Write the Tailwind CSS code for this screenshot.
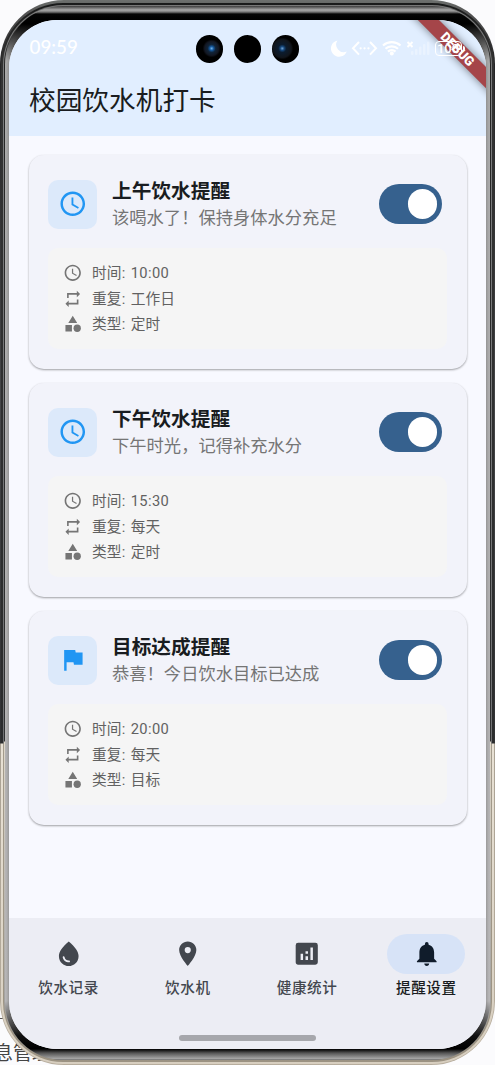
<!DOCTYPE html>
<html lang="zh-CN">
<head>
<meta charset="utf-8">
<meta name="viewport" content="width=device-width">
<title>校园饮水机打卡</title>
<script src="https://cdn.jsdelivr.net/npm/@tailwindcss/browser@4"></script>
</head>
<body class="relative h-[1065px] w-[495px] overflow-hidden bg-[#fbfbfd] font-['Roboto','Noto_Sans_CJK_SC',sans-serif]">
<svg width="0" height="0" class="absolute">
  <symbol id="clock" viewBox="0 0 24 24"><path fill="currentColor" d="M11.99 2C6.47 2 2 6.48 2 12s4.47 10 9.99 10C17.52 22 22 17.52 22 12S17.52 2 11.99 2zM12 20c-4.42 0-8-3.58-8-8s3.58-8 8-8 8 3.58 8 8-3.58 8-8 8zm.5-13H11v6l5.25 3.15.75-1.23-4.5-2.67z"/></symbol>
  <symbol id="repeat" viewBox="0 0 24 24"><path fill="currentColor" d="M7 7h10v3l4-4-4-4v3H5v6h2V7zm10 10H7v-3l-4 4 4 4v-3h12v-6h-2v4z"/></symbol>
  <symbol id="category" viewBox="0 0 24 24"><path fill="currentColor" d="m12 2-5.500 9h11zM3 13.500h8v8H3z"/><circle cx="17.500" cy="17.500" r="4.500" fill="currentColor"/></symbol>
  <symbol id="flag" viewBox="0 0 24 24"><path fill="currentColor" d="M14.400 6 14 4H5v17h2v-7h5.600l.4 2h7V6z"/></symbol>
</svg>
<div class="absolute bottom-0 left-[-6px] z-0 h-[22px] whitespace-nowrap text-[19px] leading-[22px] text-[#444]">息管理</div>
<div class="absolute left-0 top-[1018px] h-px w-2 bg-[#555]"></div>

<!-- Phone body -->
<div class="relative h-[1065px] rounded-[64px] bg-[linear-gradient(#6d706e_0,#555_12px,#252526_60px,#454648_400px,#303133_743px,#aaa294_744px,#b8ae9e_100%)] px-[1px] pt-[3px] pb-[1px]">
<div class="h-full rounded-[62px] bg-[linear-gradient(#191a1a_0,#333_60px,#2b2c2d_740px,#e8e1d4_741px,#d7cebf_100%)] px-[2px] pt-[2px] pb-[2px]">
<div class="h-full rounded-[60px] bg-[linear-gradient(#777_0,#7b7c7d_70px,#707173_738px,#a39b8c_739px,#9b9282_100%)] px-[1px] pt-[1px] pb-[2px]">
<div class="h-full rounded-[59px] bg-[linear-gradient(#888_0,#aaa_6px,#4b4b4b_9px,#252525_50px,#303132_735px,#ded7c9_736px,#999_1041px,#777_100%)] px-[1px] pt-0 pb-0">
<div class="h-full rounded-[58px] bg-[linear-gradient(#3b3b3b_0,#aaa_4px,#777_6px,#050505_8px,#000_18px,#aaa_55px,#b8b7b8_995px,#111_1030px,#000_1043px,#555_1047px,#aaa_1053px,#555_100%)] px-[4px] pt-[14px] pb-[8px]">

<!-- Screen -->
<div class="relative flex h-[1029px] flex-col overflow-hidden rounded-[48px] bg-[#f8f9ff] shadow-[0_0_3px_1px_#00000030]">
  <header class="h-[115.500px] shrink-0 bg-[#e1eeff]">
    <div class="relative flex h-[57px] items-center justify-between pl-[20.500px] pr-[22px] text-white">
      <span class="-mt-[3px] font-['Lato','Noto_Sans_CJK_SC',sans-serif] text-[18.800px] font-medium leading-none">09:59</span>
      <div class="absolute left-[186.500px] top-[15px] flex gap-[10.500px]">
        <div class="h-[27.500px] w-[27.500px] rounded-full bg-[radial-gradient(circle_at_58%_48%,#71b4ec_0,#15579b_2px,#102439_4px,#131722_7px,#000_9px)]"></div>
        <div class="h-[27.500px] w-[27.500px] rounded-full bg-black"></div>
        <div class="h-[27.500px] w-[27.500px] rounded-full bg-[radial-gradient(circle_at_38%_48%,#71a4d6_0,#16477b_2px,#0b1c2f_4px,#11151b_9px,#000_11px)]"></div>
      </div>
      <svg width="134" height="20" viewBox="0 0 134 20" fill="none" stroke="#fff" stroke-width="2" class="absolute left-[321px] top-[18px]">
        <path fill="#fff" stroke="none" d="M7.500 2.500A8.200 8.200 0 1 0 16.800 13.500 7.500 7.500 0 0 1 7.500 2.500z"/>
        <path d="m29 4-6 6.300 6 6.300M40 4l6 6.300-6 6.300"/>
        <path stroke-linecap="round" stroke-width="2.200" d="M30.600 10.300h.1M34.500 10.300h.1M38.400 10.300h.1"/>
        <path stroke-width="2.200" d="M53 7.500a13 13 0 0 1 17.500 0M55.500 10.800a9 9 0 0 1 12.500 0M58 13.600a5.300 5.300 0 0 1 7.500 0"/>
        <circle cx="61.800" cy="15.500" r="2" fill="#fff" stroke="none"/>
        <path d="m77.500 4 5 5m0-5-5 5"/>
        <g fill="#fff" fill-opacity=".3" stroke="none"><rect x="81" y="13" width="2.500" height="4" rx="1"/><rect x="85" y="11" width="2.500" height="6" rx="1"/><rect x="89" y="8.500" width="2.500" height="8.500" rx="1"/><rect x="93" y="6" width="2.500" height="11" rx="1"/><rect x="97" y="3.500" width="2.500" height="13.500" rx="1"/></g>
      </svg>
    </div>
    <h1 class="mt-px pl-5 text-[26.700px] font-normal leading-[46px] text-[#191c20]">校园饮水机打卡</h1>
  </header>
  <!-- Debug ribbon, with the battery indicator over it -->
  <div class="absolute left-[378px] top-[21px] flex h-[14.500px] w-[140px] rotate-45 items-center justify-center bg-[#a54549] text-[13px] font-black leading-none text-white shadow-[0_0_8px_#0000007f]"><span class="translate-x-[1px]">DEBUG</span></div>
  <div class="absolute left-[425.500px] top-[21px] flex h-[15px] w-[27px] items-center justify-center rounded-[4px] border-[1.500px] border-white text-[13px] font-medium leading-none text-white">100</div>
  <div class="absolute left-[453.500px] top-[26px] h-[5px] w-[2px] rounded-r bg-white"></div>

  <main class="flex grow flex-col gap-[14.500px] px-[19.500px] pt-[19.500px]">
    <section class="h-[213.500px] rounded-[15px] bg-[#f2f3fa] px-[19.500px] pt-[24.500px] shadow-[0_1px_2px_#0000004d,0_1px_3px_#00000014]">
      <div class="flex h-[49px] items-center">
        <div class="flex h-[49px] w-[49px] items-center justify-center rounded-[10px] bg-[#dce9fa] text-[#2196f3]"><svg width="29.500" height="29.500"><use href="#clock"/></svg></div>
        <div class="ml-[15px] grow whitespace-nowrap pt-px"><h2 class="text-[19.700px] font-bold leading-[27px] text-[#191c20]">上午饮水提醒</h2><p class="text-[17.300px] leading-[26px] text-[#757575]">该喝水了！保持身体水分充足</p></div>
        <div class="mr-[5px] flex h-[39.500px] w-[63.500px] shrink-0 items-center justify-end rounded-full bg-[#36618e] pr-[5px]"><div class="h-[29.500px] w-[29.500px] rounded-full bg-white"></div></div>
      </div>
      <div class="mt-[19.500px] flex h-[101px] flex-col rounded-[10px] bg-[#f5f5f5] px-[14.500px] pt-[13px] text-[14.700px] leading-[25.700px] tracking-[0.15px] text-[#616161]">
        <div class="flex items-center gap-[10px]"><svg width="19.500" height="19.500" class="-mt-[1.500px] text-[#757575]"><use href="#clock"/></svg><span class="[word-spacing:1.5px]">时间: <span class="tracking-[0.4px]">10:00</span></span></div>
        <div class="flex items-center gap-[10px]"><svg width="19.500" height="19.500" class="-mt-[1.500px] text-[#757575]"><use href="#repeat"/></svg><span class="[word-spacing:1.5px]">重复: 工作日</span></div>
        <div class="flex items-center gap-[10px]"><svg width="19.500" height="19.500" class="-mt-[2.500px] text-[#757575]"><use href="#category"/></svg><span class="[word-spacing:1.5px]">类型: 定时</span></div>
      </div>
    </section>
    <section class="h-[213.500px] rounded-[15px] bg-[#f2f3fa] px-[19.500px] pt-[24.500px] shadow-[0_1px_2px_#0000004d,0_1px_3px_#00000014]">
      <div class="flex h-[49px] items-center">
        <div class="flex h-[49px] w-[49px] items-center justify-center rounded-[10px] bg-[#dce9fa] text-[#2196f3]"><svg width="29.500" height="29.500"><use href="#clock"/></svg></div>
        <div class="ml-[15px] grow whitespace-nowrap pt-px"><h2 class="text-[19.700px] font-bold leading-[27px] text-[#191c20]">下午饮水提醒</h2><p class="text-[17.300px] leading-[26px] text-[#757575]">下午时光，记得补充水分</p></div>
        <div class="mr-[5px] flex h-[39.500px] w-[63.500px] shrink-0 items-center justify-end rounded-full bg-[#36618e] pr-[5px]"><div class="h-[29.500px] w-[29.500px] rounded-full bg-white"></div></div>
      </div>
      <div class="mt-[19.500px] flex h-[101px] flex-col rounded-[10px] bg-[#f5f5f5] px-[14.500px] pt-[13px] text-[14.700px] leading-[25.700px] tracking-[0.15px] text-[#616161]">
        <div class="flex items-center gap-[10px]"><svg width="19.500" height="19.500" class="-mt-[1.500px] text-[#757575]"><use href="#clock"/></svg><span class="[word-spacing:1.5px]">时间: <span class="tracking-[0.4px]">15:30</span></span></div>
        <div class="flex items-center gap-[10px]"><svg width="19.500" height="19.500" class="-mt-[1.500px] text-[#757575]"><use href="#repeat"/></svg><span class="[word-spacing:1.5px]">重复: 每天</span></div>
        <div class="flex items-center gap-[10px]"><svg width="19.500" height="19.500" class="-mt-[2.500px] text-[#757575]"><use href="#category"/></svg><span class="[word-spacing:1.5px]">类型: 定时</span></div>
      </div>
    </section>
    <section class="h-[213.500px] rounded-[15px] bg-[#f2f3fa] px-[19.500px] pt-[24.500px] shadow-[0_1px_2px_#0000004d,0_1px_3px_#00000014]">
      <div class="flex h-[49px] items-center">
        <div class="flex h-[49px] w-[49px] items-center justify-center rounded-[10px] bg-[#dce9fa] text-[#2196f3]"><svg width="29.500" height="29.500"><use href="#flag"/></svg></div>
        <div class="ml-[15px] grow whitespace-nowrap pt-px"><h2 class="text-[19.700px] font-bold leading-[27px] text-[#191c20]">目标达成提醒</h2><p class="text-[17.300px] leading-[26px] text-[#757575]">恭喜！今日饮水目标已达成</p></div>
        <div class="mr-[5px] flex h-[39.500px] w-[63.500px] shrink-0 items-center justify-end rounded-full bg-[#36618e] pr-[5px]"><div class="h-[29.500px] w-[29.500px] rounded-full bg-white"></div></div>
      </div>
      <div class="mt-[19.500px] flex h-[101px] flex-col rounded-[10px] bg-[#f5f5f5] px-[14.500px] pt-[13px] text-[14.700px] leading-[25.700px] tracking-[0.15px] text-[#616161]">
        <div class="flex items-center gap-[10px]"><svg width="19.500" height="19.500" class="-mt-[1.500px] text-[#757575]"><use href="#clock"/></svg><span class="[word-spacing:1.5px]">时间: <span class="tracking-[0.4px]">20:00</span></span></div>
        <div class="flex items-center gap-[10px]"><svg width="19.500" height="19.500" class="-mt-[1.500px] text-[#757575]"><use href="#repeat"/></svg><span class="[word-spacing:1.5px]">重复: 每天</span></div>
        <div class="flex items-center gap-[10px]"><svg width="19.500" height="19.500" class="-mt-[2.500px] text-[#757575]"><use href="#category"/></svg><span class="[word-spacing:1.5px]">类型: 目标</span></div>
      </div>
    </section>
  </main>

  <footer class="flex h-[131.500px] shrink-0 flex-col items-center bg-[#ecedf4]">
    <nav class="grid h-[117.500px] w-full grid-cols-4 pt-[16.500px] text-[14.600px] font-medium leading-[28px] tracking-[0.6px] text-[#43474e]">
      <div class="flex flex-col items-center"><div class="flex h-[39.500px] w-[78px] items-center justify-center"><svg width="29.500" height="29.500" viewBox="0 0 24 24"><path fill="currentColor" d="M12 2c-5.330 4.550-8 8.480-8 11.800 0 4.980 3.800 8.200 8 8.200s8-3.220 8-8.200C20 10.480 17.330 6.550 12 2zM7.830 14c.37 0 .67.260.74.620.41 2.220 2.280 2.980 3.640 2.870.43-.02.790.320.79.750 0 .4-.32.730-.72.750-2.130.13-4.620-1.090-5.190-4.120-.08-.45.280-.87.740-.87z"/></svg></div>饮水记录</div>
      <div class="flex flex-col items-center"><div class="flex h-[39.500px] w-[78px] items-center justify-center"><svg width="29.500" height="29.500" viewBox="0 0 24 24"><path fill="currentColor" d="M12 2C8.130 2 5 5.130 5 9c0 5.250 7 13 7 13s7-7.750 7-13c0-3.870-3.130-7-7-7zm0 9.500A2.500 2.500 0 1 1 12 6.500a2.500 2.500 0 0 1 0 5z"/></svg></div>饮水机</div>
      <div class="flex flex-col items-center"><div class="flex h-[39.500px] w-[78px] items-center justify-center"><svg width="29.500" height="29.500" viewBox="0 0 24 24"><path fill="currentColor" fill-rule="evenodd" d="M19 3H5a2 2 0 0 0-2 2v14c0 1.100.9 2 2 2h14a2 2 0 0 0 2-2V5a2 2 0 0 0-2-2zM9 17H7v-5h2v5zm4 0h-2v-3h2v3zm0-5h-2v-2h2v2zm4 5h-2V7h2v10z"/></svg></div>健康统计</div>
      <div class="flex flex-col items-center text-[#191c20]"><div class="flex h-[39.500px] w-[78px] items-center justify-center rounded-full bg-[#d7e3f7] text-[#101c2b]"><svg width="29.500" height="29.500" viewBox="0 0 24 24"><path fill="currentColor" d="M12 22c1.100 0 2-.9 2-2h-4c0 1.100.890 2 2 2zm6-6v-5c0-3.070-1.640-5.640-4.500-6.320V4a1.500 1.500 0 0 0-3 0v.68C7.630 5.360 6 7.920 6 11v5l-2 2v1h16v-1l-2-2z"/></svg></div>提醒设置</div>
    </nav>
    <div class="h-[6px] w-[137px] rounded-full bg-[#a6a7ac]"></div>
  </footer>
</div>
</div></div></div></div></div>
</body>
</html>
